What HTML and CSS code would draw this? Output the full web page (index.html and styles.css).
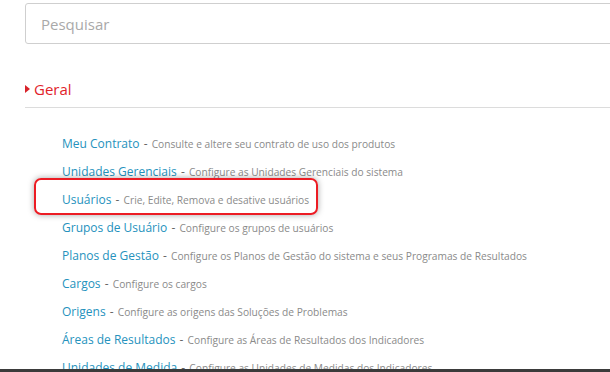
FILE: index.html
```html
<!DOCTYPE html>
<html lang="pt-BR">
<head>
    <meta charset="UTF-8">
    <meta name="viewport" content="width=device-width, initial-scale=1.0">
    <title>Configurações</title>
    <link rel="stylesheet" href="styles.css">
</head>
<body>

    <div class="page">
        <input type="text" class="search" placeholder="Pesquisar">

        <div class="section-title">
            <span class="caret"></span>
            <span>Geral</span>
        </div>
        <div class="divider"></div>

        <ul class="menu">
            <li><a href="#">Meu Contrato</a> <span class="dash">-</span> <span class="desc">Consulte e altere seu contrato de uso dos produtos</span></li>
            <li><a href="#">Unidades Gerenciais</a> <span class="dash">-</span> <span class="desc">Configure as Unidades Gerenciais do sistema</span></li>
            <li class="marked"><span class="highlight"></span><a href="#">Usuários</a> <span class="dash">-</span> <span class="desc">Crie, Edite, Remova e desative usuários</span></li>
            <li><a href="#">Grupos de Usuário</a> <span class="dash">-</span> <span class="desc">Configure os grupos de usuários</span></li>
            <li><a href="#">Planos de Gestão</a> <span class="dash">-</span> <span class="desc">Configure os Planos de Gestão do sistema e seus Programas de Resultados</span></li>
            <li><a href="#">Cargos</a> <span class="dash">-</span> <span class="desc">Configure os cargos</span></li>
            <li><a href="#">Origens</a> <span class="dash">-</span> <span class="desc">Configure as origens das Soluções de Problemas</span></li>
            <li><a href="#">Áreas de Resultados</a> <span class="dash">-</span> <span class="desc">Configure as Áreas de Resultados dos Indicadores</span></li>
            <li><a href="#">Unidades de Medida</a> <span class="dash">-</span> <span class="desc">Configure as Unidades de Medidas dos Indicadores</span></li>
        </ul>
    </div>

    <div class="bottom-bar"></div>

</body>
</html>
```

FILE: styles.css
```css
body {
    font-family: 'Open Sans', 'Noto Sans', sans-serif;
    margin: 0;
    background-color: #fff;
    color: #333;
    overflow: hidden;
}

.page {
    padding: 3px 0 0 25px;
}

.search {
    display: block;
    width: calc(100% + 10px);
    height: 41px;
    box-sizing: border-box;
    border: 1px solid #cfcfcf;
    border-radius: 3px;
    padding: 0 15px;
    font-family: inherit;
    font-size: 15px;
    color: #555;
    outline: none;
}

.search::placeholder {
    color: #a9a9a9;
}

.section-title {
    display: flex;
    align-items: center;
    gap: 4px;
    margin-top: 34px;
    height: 22px;
    font-size: 15px;
    color: #e1232b;
}

.caret {
    width: 0;
    height: 0;
    border-top: 4px solid transparent;
    border-bottom: 4px solid transparent;
    border-left: 5px solid #d8232a;
}

.divider {
    margin-top: 5px;
    height: 1px;
    background-color: #e4e4e4;
    border-bottom: 2px solid #dcdcdc;
}

.divider::after {
    content: "";
    display: block;
    height: 2px;
    background-color: #fff;
}

.menu {
    list-style: none;
    margin: 20px 0 0 0;
    padding: 0 0 0 37px;
}

.menu li {
    position: relative;
    height: 28px;
    line-height: 28px;
    white-space: nowrap;
}

.menu a {
    color: #2592bd;
    text-decoration: none;
    font-size: 12px;
}

.dash {
    color: #666;
    font-size: 12px;
}

.desc {
    color: #8a8a8a;
    font-size: 10.2px;
}

.highlight {
    position: absolute;
    left: -28px;
    top: -6px;
    width: 284px;
    height: 37px;
    box-sizing: border-box;
    border: 2px solid #ec1c24;
    border-radius: 7px;
    box-shadow: 0 0 6px rgba(0, 0, 0, 0.35);
}

.bottom-bar {
    position: fixed;
    left: 0;
    right: 0;
    bottom: 0;
    height: 3px;
    background-color: #3b3b3b;
}
```
